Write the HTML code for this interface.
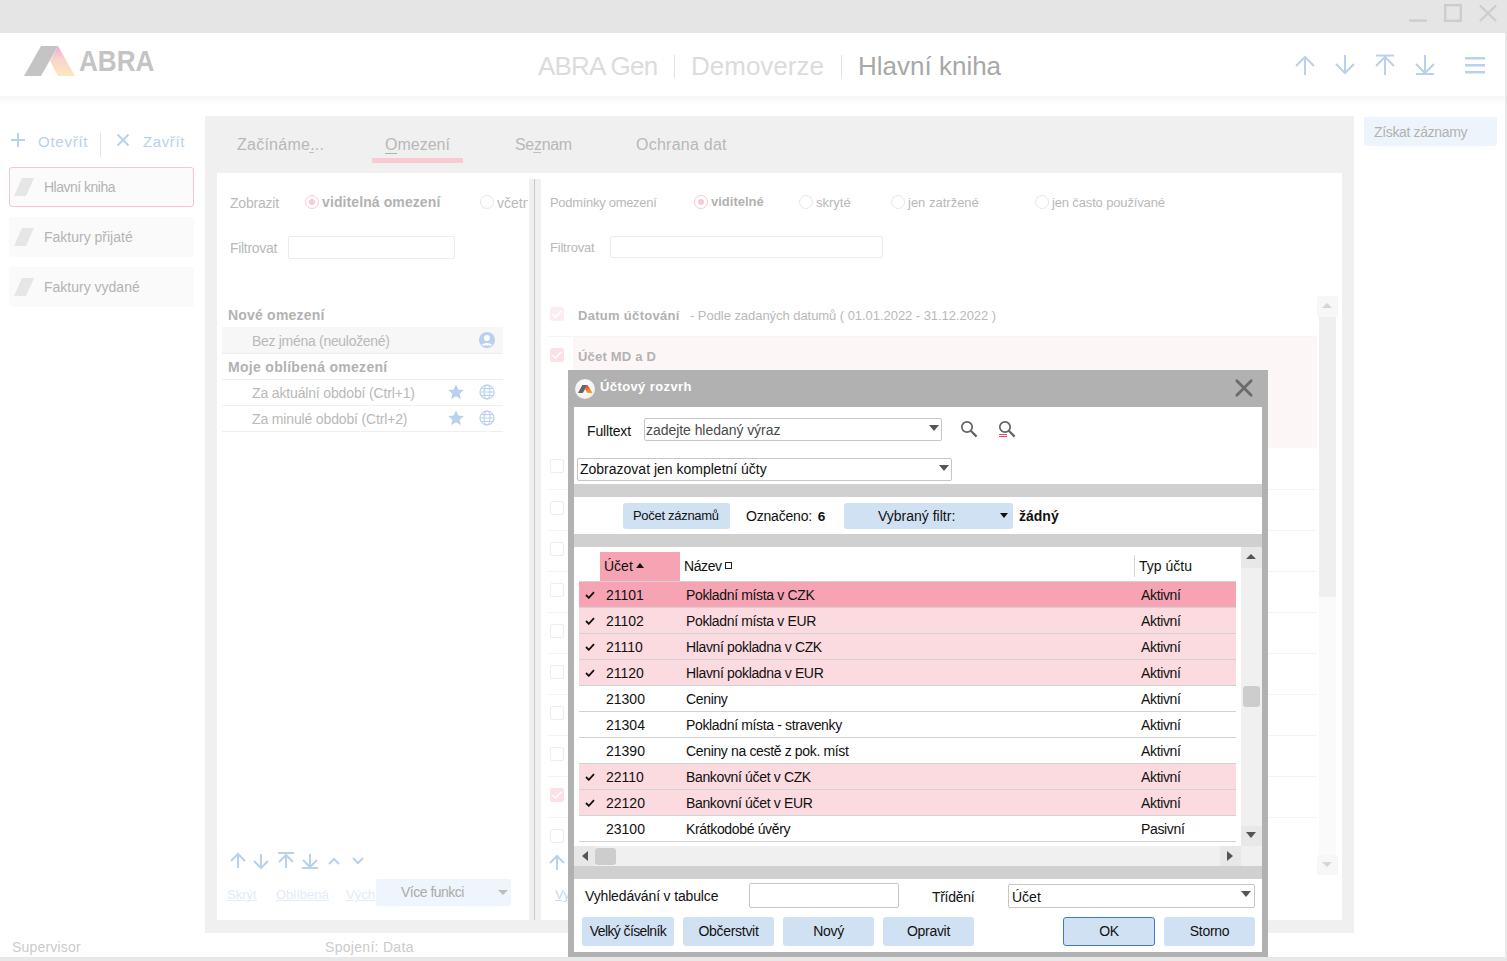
<!DOCTYPE html>
<html><head><meta charset="utf-8">
<style>
*{margin:0;padding:0;box-sizing:border-box}
html,body{width:1507px;height:961px;overflow:hidden;background:#fff;font-family:"Liberation Sans",sans-serif}
.a{position:absolute;white-space:nowrap}
#titlebar{left:0;top:0;width:1507px;height:33px;background:#e5e5e5}
#hdrshadow{left:0;top:96px;width:1505px;height:9px;background:linear-gradient(#f6f6f6,#fff)}
.ttl{font-size:26px;top:51px;color:#dcdcdc}
.sep{width:1px;background:#e3e3e3}
.bi{color:#b9d1ec}
.side{left:9px;width:185px;height:40px;background:#fafafa;border-radius:3px}
.side span{position:absolute;left:35px;top:12px;font-size:14px;color:#b4b4b4;letter-spacing:-0.5px}
.side i{position:absolute;left:5px;top:11px;width:20px;height:18px;background:#e6e6e6;clip-path:polygon(40% 0,100% 0,60% 100%,0 100%)}
.tab{top:136px;font-size:16px;color:#b8b8b8}
.g{font-size:14px;color:#b9b9b9}
.gb{font-size:14px;color:#b2b2b2;font-weight:bold}
.g13{font-size:13px;color:#b9b9b9}
.gb13{font-size:13px;color:#b2b2b2;font-weight:bold}
.rad{width:14px;height:14px;border:1px solid #e6e6e6;border-radius:50%;background:#fff}
.rad.on{border-color:#f9c8d1}
.rad.on::after{content:"";position:absolute;left:3px;top:3px;width:6px;height:6px;border-radius:50%;background:#f9c8d1}
.inp{border:1px solid #ececec;border-radius:2px;background:#fff}
.lk{font-size:13px;color:#e2ebf6;text-decoration:underline}
.tri{width:0;height:0;border-style:solid;border-color:transparent;border-width:5px 5px 0}
.cb{width:14px;height:14px;border:1px solid #ededed;border-radius:2px;background:#fff}
.cb.on1{background:#fdedf0;border-color:#fdedf0}
.cb.on2,.cb.on3{background:#fde0e5;border-color:#fde0e5}

.dt{font-size:14px;color:#111}
.cbx{border:1px solid #c6c6c6;border-radius:2px;background:#fff}
.sepg{left:574px;width:688px;background:#d0d0d0}
.btn{background:#d1e1f4;border-radius:3px}
.b2{top:917px;height:29px;font-size:14px;color:#111;text-align:center;line-height:29px;letter-spacing:-0.3px}
.gr{left:579px;width:657px;height:25px;margin-top:1px}
.gr span{position:absolute;top:5px;font-size:14px;color:#111}
.gr .nm{letter-spacing:-0.35px}
.ck{position:absolute;left:6px;top:9px}
</style></head>
<body>
<!-- title bar -->
<div class="a" id="titlebar"></div>
<svg class="a" style="left:1400px;top:0" width="107" height="33">
 <g stroke="#cdcdcd" stroke-width="2.4" fill="none">
  <line x1="9" y1="20.6" x2="27" y2="20.6"/>
  <rect x="45.2" y="5.2" width="15.6" height="15.6"/>
  <line x1="80" y1="5.5" x2="96" y2="21"/><line x1="96" y1="5.5" x2="80" y2="21"/>
 </g>
</svg>
<div class="a" style="left:1505px;top:33px;width:2px;height:928px;background:#e8e8e8"></div>
<!-- header -->
<div class="a" id="hdrshadow"></div>
<svg class="a" style="left:24px;top:46px" width="52" height="31">
 <defs><linearGradient id="lg" x1="0" y1="0" x2="0" y2="1"><stop offset="0" stop-color="#f4a8d4"/><stop offset=".45" stop-color="#f8d6cc"/><stop offset="1" stop-color="#fde6bf"/></linearGradient></defs>
 <polygon points="0,30 17,0 34,0 17,30" fill="#c4c4c4"/>
 <polygon points="34,0 51,30 34,30 26,15" fill="url(#lg)"/>
</svg>
<div class="a" style="left:79px;top:45px;font-size:29px;font-weight:bold;color:#c4c4c4;transform:scaleX(0.9);transform-origin:0 0">ABRA</div>
<div class="a ttl" style="left:538px;letter-spacing:-0.8px">ABRA Gen</div>
<div class="a sep" style="left:674px;top:55px;height:23px"></div>
<div class="a ttl" style="left:691px">Demoverze</div>
<div class="a sep" style="left:841px;top:55px;height:23px"></div>
<div class="a ttl" style="left:858px;color:#a8a8a8">Hlavní kniha</div>
<!-- header right icons -->
<svg class="a" style="left:1290px;top:50px" width="200" height="30">
 <g stroke="#b9d1ec" stroke-width="2" fill="none">
  <path d="M15 25V7M6 16L15 7L24 16"/>
  <path d="M55 5V23M46 14L55 23L64 14"/>
  <path d="M86 5.5H104M95 25V7M86 16L95 7L104 16"/>
  <path d="M126 24H144M135 5V23M126 14L135 23L144 14"/>
 </g>
 <g fill="#b9d1ec"><rect x="175" y="7" width="20" height="2.5"/><rect x="175" y="14" width="20" height="2.5"/><rect x="175" y="21" width="20" height="2.5"/></g>
</svg>
<!-- status bar -->
<div class="a" style="left:12px;top:939px;font-size:14px;color:#cbcbcb;letter-spacing:0.2px">Supervisor</div>
<div class="a" style="left:325px;top:939px;font-size:14px;color:#cbcbcb;letter-spacing:0.3px">Spojení: Data</div>
<div class="a" style="left:0;top:957px;width:1507px;height:4px;background:#e8e8e8"></div>
<!-- sidebar -->
<svg class="a" style="left:10px;top:132px" width="180" height="26">
 <g stroke="#b9d1ec" stroke-width="2" fill="none">
  <path d="M8 1V15M1 8H15"/>
  <path d="M107.5 2.5L118.5 13.5M118.5 2.5L107.5 13.5"/>
 </g>
</svg>
<div class="a bi" style="left:38px;top:133px;font-size:15px;letter-spacing:0.75px">Otevřít</div>
<div class="a" style="left:100px;top:133px;width:1px;height:24px;background:#e3e3e3"></div>
<div class="a bi" style="left:143px;top:133px;font-size:15px;letter-spacing:0.6px">Zavřít</div>
<div class="a side" style="top:167px;border:1px solid #f7c6cf;background:#fbfbfb"><i style="left:4px;top:10px"></i><span style="left:34px;top:11px">Hlavní kniha</span></div>
<div class="a side" style="top:217px"><i></i><span style="letter-spacing:0">Faktury přijaté</span></div>
<div class="a side" style="top:267px"><i></i><span style="letter-spacing:0">Faktury vydané</span></div>

<!-- main panel -->
<div class="a" style="left:205px;top:116px;width:1149px;height:817px;background:#f0f0f0"></div>
<div class="a" style="left:217px;top:173px;width:312px;height:747px;background:#fff"></div>
<div class="a" style="left:541px;top:173px;width:801px;height:747px;background:#fff"></div>
<div class="a" style="left:529px;top:173px;width:12px;height:6px;background:#fff"></div>
<div class="a" style="left:534px;top:179px;width:1px;height:741px;background:#cacaca"></div>
<!-- tabs -->
<div class="a tab" style="left:237px;letter-spacing:0.25px">Začínáme...</div>
<div class="a" style="left:309px;top:152px;width:5px;height:1px;background:#c0c0c0"></div>
<div class="a tab" style="left:385px">Omezení</div>
<div class="a" style="left:385px;top:153px;width:12px;height:1px;background:#b0b0b0"></div>
<div class="a" style="left:372px;top:158px;width:91px;height:5px;background:#fac9d2"></div>
<div class="a tab" style="left:515px;letter-spacing:-0.3px">Seznam</div>
<div class="a tab" style="left:636px;letter-spacing:0.25px">Ochrana dat</div>
<div class="a" style="left:533px;top:152px;width:8px;height:1px;background:#c0c0c0"></div>

<!-- left sub panel -->
<div class="a g" style="left:230px;top:195px;letter-spacing:-0.2px">Zobrazit</div>
<div class="a rad on" style="left:305px;top:195px"></div>
<div class="a gb" style="left:322px;top:194px;letter-spacing:0.1px">viditelná omezení</div>
<div class="a rad" style="left:480px;top:195px"></div>
<div class="a" style="left:497px;top:194px;width:31px;overflow:hidden"><span class="g" style="font-size:14px">včetně</span></div>
<div class="a g" style="left:230px;top:240px;letter-spacing:-0.3px">Filtrovat</div>
<div class="a inp" style="left:288px;top:236px;width:167px;height:23px"></div>

<div class="a gb" style="left:228px;top:307px;letter-spacing:0.2px">Nové omezení</div>
<div class="a" style="left:222px;top:327px;width:281px;height:27px;background:#f7f7f7;border-bottom:1px solid #f0f0f0"></div>
<div class="a g" style="left:252px;top:333px;letter-spacing:-0.3px">Bez jména (neuložené)</div>
<svg class="a" style="left:478px;top:331px" width="18" height="18"><circle cx="9" cy="9" r="8" fill="#b9d1ec"/><circle cx="9" cy="7" r="3" fill="#fff"/><path d="M3.5 14.5C5 11 13 11 14.5 14.5" fill="#fff"/></svg>
<div class="a gb" style="left:228px;top:359px;letter-spacing:0.3px">Moje oblíbená omezení</div>
<div class="a" style="left:222px;top:379px;width:281px;height:1px;background:#efefef"></div>
<div class="a g" style="left:252px;top:385px;letter-spacing:-0.15px">Za aktuální období (Ctrl+1)</div>
<div class="a" style="left:222px;top:405px;width:281px;height:1px;background:#efefef"></div>
<div class="a g" style="left:252px;top:411px;letter-spacing:-0.15px">Za minulé období (Ctrl+2)</div>
<div class="a" style="left:222px;top:431px;width:281px;height:1px;background:#efefef"></div>
<svg class="a" style="left:446px;top:383px" width="52" height="44">
 <g fill="#b9d1ec"><path id="st" d="M10 1.5L12.3 6.6L17.8 7.1L13.6 10.8L14.9 16.2L10 13.3L5.1 16.2L6.4 10.8L2.2 7.1L7.7 6.6Z"/>
 <path transform="translate(0,26)" d="M10 1.5L12.3 6.6L17.8 7.1L13.6 10.8L14.9 16.2L10 13.3L5.1 16.2L6.4 10.8L2.2 7.1L7.7 6.6Z"/></g>
 <g fill="none" stroke="#b9d1ec" stroke-width="1.2" id="gl"><circle cx="41" cy="9" r="7"/><ellipse cx="41" cy="9" rx="3" ry="7"/><path d="M34 9H48M35 5.5H47M35 12.5H47"/></g>
 <g fill="none" stroke="#b9d1ec" stroke-width="1.2" transform="translate(0,26)"><circle cx="41" cy="9" r="7"/><ellipse cx="41" cy="9" rx="3" ry="7"/><path d="M34 9H48M35 5.5H47M35 12.5H47"/></g>
</svg>
<!-- left bottom icons -->
<svg class="a" style="left:228px;top:850px" width="142" height="22">
 <g stroke="#b9d1ec" stroke-width="2" fill="none">
  <path d="M10 18V4M3 11L10 4L17 11"/>
  <path d="M33 4V18M26 11L33 18L40 11"/>
  <path d="M50 3H66M58 18V5M51 12L58 5L65 12"/>
  <path d="M74 18H90M82 4V17M75 10L82 17L89 10"/>
  <path d="M101 14L106 9L111 14"/>
  <path d="M125 8L130 13L135 8"/>
 </g>
</svg>
<div class="a lk" style="left:227px;top:887px">Skrýt</div>
<div class="a lk" style="left:276px;top:887px">Oblíbená</div>
<div class="a lk" style="left:346px;top:887px">Vých</div>
<div class="a" style="left:376px;top:879px;width:135px;height:27px;background:#eff5fc;border-radius:2px"></div>
<div class="a" style="left:401px;top:884px;font-size:14px;color:#ababab;letter-spacing:-0.5px">Více funkci</div>
<div class="a tri" style="left:498px;top:890px;border-top-color:#bdbdbd"></div>

<!-- right sub panel -->
<div class="a g13" style="left:550px;top:195px;letter-spacing:-0.3px">Podmínky omezení</div>
<div class="a rad on" style="left:694px;top:195px"></div>
<div class="a gb13" style="left:711px;top:194px">viditelné</div>
<div class="a rad" style="left:799px;top:195px"></div>
<div class="a g13" style="left:816px;top:195px">skryté</div>
<div class="a rad" style="left:891px;top:195px"></div>
<div class="a g13" style="left:908px;top:195px">jen zatržené</div>
<div class="a rad" style="left:1035px;top:195px"></div>
<div class="a g13" style="left:1052px;top:195px;letter-spacing:-0.15px">jen často používané</div>
<div class="a g13" style="left:550px;top:240px;letter-spacing:-0.2px">Filtrovat</div>
<div class="a inp" style="left:610px;top:236px;width:273px;height:22px"></div>

<div class="a cb on1" style="left:550px;top:307px"><svg style="position:absolute;left:-1px;top:-1px" width="14" height="14"><path d="M2.5 7.2L5.3 10L11.3 4.2" stroke="#fff" stroke-width="1.7" fill="none"/></svg></div>
<div class="a gb13" style="left:578px;top:308px;letter-spacing:0.3px">Datum účtování</div>
<div class="a g13" style="left:690px;top:308px;letter-spacing:-0.05px">- Podle zadaných datumů ( 01.01.2022 - 31.12.2022 )</div>
<div class="a" style="left:547px;top:336px;width:770px;height:1px;background:#f5f5f5"></div>
<div class="a" style="left:573px;top:337px;width:744px;height:111px;background:#fdf6f7"></div>
<div class="a cb on2" style="left:550px;top:348px"><svg style="position:absolute;left:-1px;top:-1px" width="14" height="14"><path d="M2.5 7.2L5.3 10L11.3 4.2" stroke="#fff" stroke-width="1.7" fill="none"/></svg></div>
<div class="a gb13" style="left:578px;top:349px;letter-spacing:0.2px">Účet MD a D</div>
<div class="a cb" style="left:550px;top:459px"></div>
<div class="a cb" style="left:550px;top:501px"></div>
<div class="a cb" style="left:550px;top:542px"></div>
<div class="a cb" style="left:550px;top:583px"></div>
<div class="a cb" style="left:550px;top:624px"></div>
<div class="a cb" style="left:550px;top:665px"></div>
<div class="a cb" style="left:550px;top:706px"></div>
<div class="a cb" style="left:550px;top:747px"></div>
<div class="a cb on3" style="left:550px;top:788px"><svg style="position:absolute;left:-1px;top:-1px" width="14" height="14"><path d="M2.5 7.2L5.3 10L11.3 4.2" stroke="#fff" stroke-width="1.7" fill="none"/></svg></div>
<div class="a cb" style="left:550px;top:829px"></div>
<div class="a" style="left:547px;top:489px;width:770px;height:1px;background:#f3f3f3"></div>
<div class="a" style="left:547px;top:530px;width:770px;height:1px;background:#f3f3f3"></div>
<div class="a" style="left:547px;top:571px;width:770px;height:1px;background:#f3f3f3"></div>
<div class="a" style="left:547px;top:612px;width:770px;height:1px;background:#f3f3f3"></div>
<div class="a" style="left:547px;top:653px;width:770px;height:1px;background:#f3f3f3"></div>
<div class="a" style="left:547px;top:694px;width:770px;height:1px;background:#f3f3f3"></div>
<div class="a" style="left:547px;top:735px;width:770px;height:1px;background:#f3f3f3"></div>
<div class="a" style="left:547px;top:776px;width:770px;height:1px;background:#f3f3f3"></div>
<div class="a" style="left:547px;top:817px;width:770px;height:1px;background:#f3f3f3"></div>
<!-- scrollbar bg -->
<div class="a" style="left:1317px;top:296px;width:21px;height:21px;background:#f7f7f7;border-radius:2px"></div>
<div class="a tri up" style="left:1322px;top:303px;border-bottom-color:#d5d5d5;border-width:0 5px 5px"></div>
<div class="a" style="left:1319px;top:317px;width:17px;height:280px;background:#efefef"></div>
<div class="a" style="left:1319px;top:597px;width:17px;height:258px;background:#fafafa"></div>
<div class="a" style="left:1317px;top:855px;width:21px;height:20px;background:#f7f7f7;border-radius:2px"></div>
<div class="a tri" style="left:1322px;top:862px;border-top-color:#d5d5d5;border-width:5px 5px 0"></div>
<svg class="a" style="left:548px;top:852px" width="18" height="20"><path d="M9 18V4M2 11L9 4L16 11" stroke="#b9d1ec" stroke-width="2" fill="none"/></svg>
<div class="a lk" style="left:555px;top:887px;width:13px;overflow:hidden;color:#c6d9f0">Vyp</div>

<!-- Ziskat zaznamy -->
<div class="a" style="left:1364px;top:117px;width:133px;height:29px;background:#eef4fc;border-radius:2px"></div>
<div class="a" style="left:1374px;top:124px;font-size:14px;color:#b2b2b2;letter-spacing:-0.35px">Získat záznamy</div>
<!-- dialog -->
<div class="a" style="left:568px;top:370px;width:700px;height:587px;background:#b1b1b1"></div>
<div class="a" style="left:574px;top:407px;width:688px;height:545px;background:#fff"></div>
<svg class="a" style="left:575px;top:379px" width="20" height="20">
 <defs><radialGradient id="rg" cx=".5" cy=".4" r=".6"><stop offset="0" stop-color="#fff"/><stop offset="1" stop-color="#f0f0f0"/></radialGradient>
 <linearGradient id="lg2" x1="0" y1="0" x2="0" y2="1"><stop offset="0" stop-color="#e0107a"/><stop offset=".45" stop-color="#ee6a30"/><stop offset="1" stop-color="#f5aa10"/></linearGradient></defs>
 <circle cx="10" cy="10" r="10" fill="url(#rg)"/>
 <polygon points="3,14 7.3,6 12.4,6 7.8,14" fill="#666"/>
 <polygon points="12.4,6 17.6,14 12.2,14 10,10" fill="url(#lg2)"/>
</svg>
<div class="a" style="left:600px;top:379px;font-size:13px;font-weight:bold;color:#fff;letter-spacing:0.4px">Účtový rozvrh</div>
<svg class="a" style="left:1233px;top:377px" width="22" height="22"><path d="M3.8 3.8L18.2 18.2M18.2 3.8L3.8 18.2" stroke="#6a6a6a" stroke-width="2.8" stroke-linecap="round"/></svg>

<div class="a dt" style="left:587px;top:423px;letter-spacing:-0.15px">Fulltext</div>
<div class="a cbx" style="left:644px;top:418px;width:298px;height:23px"></div>
<div class="a dt" style="left:646px;top:422px;color:#4a4a4a;letter-spacing:-0.05px">zadejte hledaný výraz</div>
<div class="a tri" style="left:929px;top:425px;border-top-color:#555;border-width:6px 5px 0"></div>
<svg class="a" style="left:958px;top:418px" width="62" height="22">
 <g stroke="#626262" fill="none"><circle cx="9" cy="9" r="5.2" stroke-width="1.7"/><path d="M12.8 12.8L18.6 18.6" stroke-width="2.2"/>
 <circle cx="47" cy="9" r="5.2" stroke-width="1.7"/><path d="M50.8 12.8L56.6 18.6" stroke-width="2.2"/></g>
 <path d="M41 16.5H49M41 18.5H49" stroke="#ee4266" stroke-width="1"/>
</svg>
<div class="a cbx" style="left:577px;top:458px;width:375px;height:23px"></div>
<div class="a dt" style="left:580px;top:461px">Zobrazovat jen kompletní účty</div>
<div class="a tri" style="left:939px;top:465px;border-top-color:#555;border-width:6px 5px 0"></div>

<div class="a sepg" style="top:484px;height:13px"></div>
<div class="a btn" style="left:623px;top:503px;width:107px;height:26px"></div>
<div class="a dt" style="left:633px;top:508px;font-size:13px;letter-spacing:-0.3px">Počet záznamů</div>
<div class="a dt" style="left:746px;top:508px;letter-spacing:-0.2px">Označeno:</div>
<div class="a dt" style="left:818px;top:509px;font-weight:bold;font-size:13px;transform:scaleX(1.05)">6</div>
<div class="a btn" style="left:844px;top:503px;width:169px;height:26px"></div>
<div class="a dt" style="left:878px;top:508px">Vybraný filtr:</div>
<div class="a tri" style="left:1000px;top:513px;border-top-color:#111;border-width:5px 4px 0"></div>
<div class="a dt" style="left:1019px;top:508px;font-weight:bold">žádný</div>
<div class="a sepg" style="top:534px;height:13px"></div>

<!-- grid -->
<div class="a" style="left:600px;top:552px;width:80px;height:29px;background:#f6a4b3"></div>
<div class="a dt" style="left:604px;top:558px">Účet</div>
<div class="a tri" style="left:636px;top:563px;border-bottom-color:#111;border-width:0 4px 5px;border-top:0"></div>
<div class="a dt" style="left:684px;top:558px;letter-spacing:-0.4px">Název</div>
<div class="a" style="left:725px;top:562px;width:7px;height:7px;border:1px solid #222"></div>
<div class="a" style="left:1134px;top:555px;width:1px;height:22px;background:#d4d4d4"></div>
<div class="a dt" style="left:1139px;top:558px">Typ účtu</div>
<div class="a" style="left:579px;top:581px;width:657px;height:261px;background:#d2d2d2"></div>
<div class="a gr" style="top:581px;background:#f6a4b3"><svg class="ck" width="10" height="8"><path d="M1 4L3.8 6.8L9 1.2" stroke="#111" stroke-width="1.8" fill="none"/></svg><span style="left:27px">21101</span><span class="nm" style="left:107px">Pokladní místa v CZK</span><span class="nm" style="left:562px">Aktivní</span></div>
<div class="a gr" style="top:607px;background:#fbdae0"><svg class="ck" width="10" height="8"><path d="M1 4L3.8 6.8L9 1.2" stroke="#111" stroke-width="1.8" fill="none"/></svg><span style="left:27px">21102</span><span class="nm" style="left:107px">Pokladní místa v EUR</span><span class="nm" style="left:562px">Aktivní</span></div>
<div class="a gr" style="top:633px;background:#fbdae0"><svg class="ck" width="10" height="8"><path d="M1 4L3.8 6.8L9 1.2" stroke="#111" stroke-width="1.8" fill="none"/></svg><span style="left:27px">21110</span><span class="nm" style="left:107px">Hlavní pokladna v CZK</span><span class="nm" style="left:562px">Aktivní</span></div>
<div class="a gr" style="top:659px;background:#fbdae0"><svg class="ck" width="10" height="8"><path d="M1 4L3.8 6.8L9 1.2" stroke="#111" stroke-width="1.8" fill="none"/></svg><span style="left:27px">21120</span><span class="nm" style="left:107px">Hlavní pokladna v EUR</span><span class="nm" style="left:562px">Aktivní</span></div>
<div class="a gr" style="top:685px;background:#fff"><span style="left:27px">21300</span><span class="nm" style="left:107px">Ceniny</span><span class="nm" style="left:562px">Aktivní</span></div>
<div class="a gr" style="top:711px;background:#fff"><span style="left:27px">21304</span><span class="nm" style="left:107px">Pokladní místa - stravenky</span><span class="nm" style="left:562px">Aktivní</span></div>
<div class="a gr" style="top:737px;background:#fff"><span style="left:27px">21390</span><span class="nm" style="left:107px">Ceniny na cestě z pok. míst</span><span class="nm" style="left:562px">Aktivní</span></div>
<div class="a gr" style="top:763px;background:#fbdae0"><svg class="ck" width="10" height="8"><path d="M1 4L3.8 6.8L9 1.2" stroke="#111" stroke-width="1.8" fill="none"/></svg><span style="left:27px">22110</span><span class="nm" style="left:107px">Bankovní účet v CZK</span><span class="nm" style="left:562px">Aktivní</span></div>
<div class="a gr" style="top:789px;background:#fbdae0"><svg class="ck" width="10" height="8"><path d="M1 4L3.8 6.8L9 1.2" stroke="#111" stroke-width="1.8" fill="none"/></svg><span style="left:27px">22120</span><span class="nm" style="left:107px">Bankovní účet v EUR</span><span class="nm" style="left:562px">Aktivní</span></div>
<div class="a gr" style="top:815px;background:#fff"><span style="left:27px">23100</span><span class="nm" style="left:107px">Krátkodobé úvěry</span><span class="nm" style="left:562px">Pasivní</span></div>
<!-- vscroll -->
<div class="a" style="left:1241px;top:547px;width:21px;height:300px;background:#f0f0f0"></div>
<div class="a" style="left:1241px;top:547px;width:21px;height:21px;background:#e8e8e8"></div>
<div class="a tri" style="left:1246px;top:554px;border-bottom-color:#555;border-width:0 5px 5px;border-top:0"></div>
<div class="a" style="left:1243px;top:686px;width:17px;height:21px;background:#cdcdcd;border-radius:3px"></div>
<div class="a" style="left:1241px;top:826px;width:21px;height:20px;background:#e8e8e8"></div>
<div class="a tri" style="left:1246px;top:832px;border-top-color:#555;border-width:6px 5px 0"></div>
<!-- hscroll -->
<div class="a" style="left:574px;top:846px;width:688px;height:20px;background:#f0f0f0"></div>
<div class="a" style="left:574px;top:846px;width:21px;height:20px;background:#e8e8e8"></div>
<div class="a tri" style="left:582px;top:851px;border-right-color:#555;border-width:5px 6px 5px 0;border-left:0"></div>
<div class="a" style="left:595px;top:848px;width:21px;height:17px;background:#cdcdcd;border-radius:3px"></div>
<div class="a" style="left:1220px;top:846px;width:21px;height:20px;background:#e8e8e8"></div>
<div class="a tri" style="left:1227px;top:851px;border-left-color:#555;border-width:5px 0 5px 6px;border-right:0"></div>
<div class="a" style="left:1241px;top:846px;width:21px;height:20px;background:#f0f0f0"></div>
<div class="a sepg" style="top:866px;height:13px"></div>

<div class="a dt" style="left:585px;top:888px;letter-spacing:-0.15px">Vyhledávání v tabulce</div>
<div class="a cbx" style="left:749px;top:883px;width:150px;height:25px"></div>
<div class="a dt" style="left:932px;top:889px;letter-spacing:-0.3px">Třídění</div>
<div class="a cbx" style="left:1008px;top:884px;width:247px;height:24px"></div>
<div class="a dt" style="left:1012px;top:889px">Účet</div>
<div class="a tri" style="left:1241px;top:891px;border-top-color:#555;border-width:6px 5px 0"></div>

<div class="a btn b2" style="left:582px;width:92px;letter-spacing:-0.6px">Velký číselník</div>
<div class="a btn b2" style="left:683px;width:91px">Občerstvit</div>
<div class="a btn b2" style="left:783px;width:91px">Nový</div>
<div class="a btn b2" style="left:883px;width:91px">Opravit</div>
<div class="a btn b2" style="left:1063px;width:92px;border:1px solid #3d7ac9;line-height:27px">OK</div>
<div class="a btn b2" style="left:1164px;width:91px">Storno</div>

</body></html>
